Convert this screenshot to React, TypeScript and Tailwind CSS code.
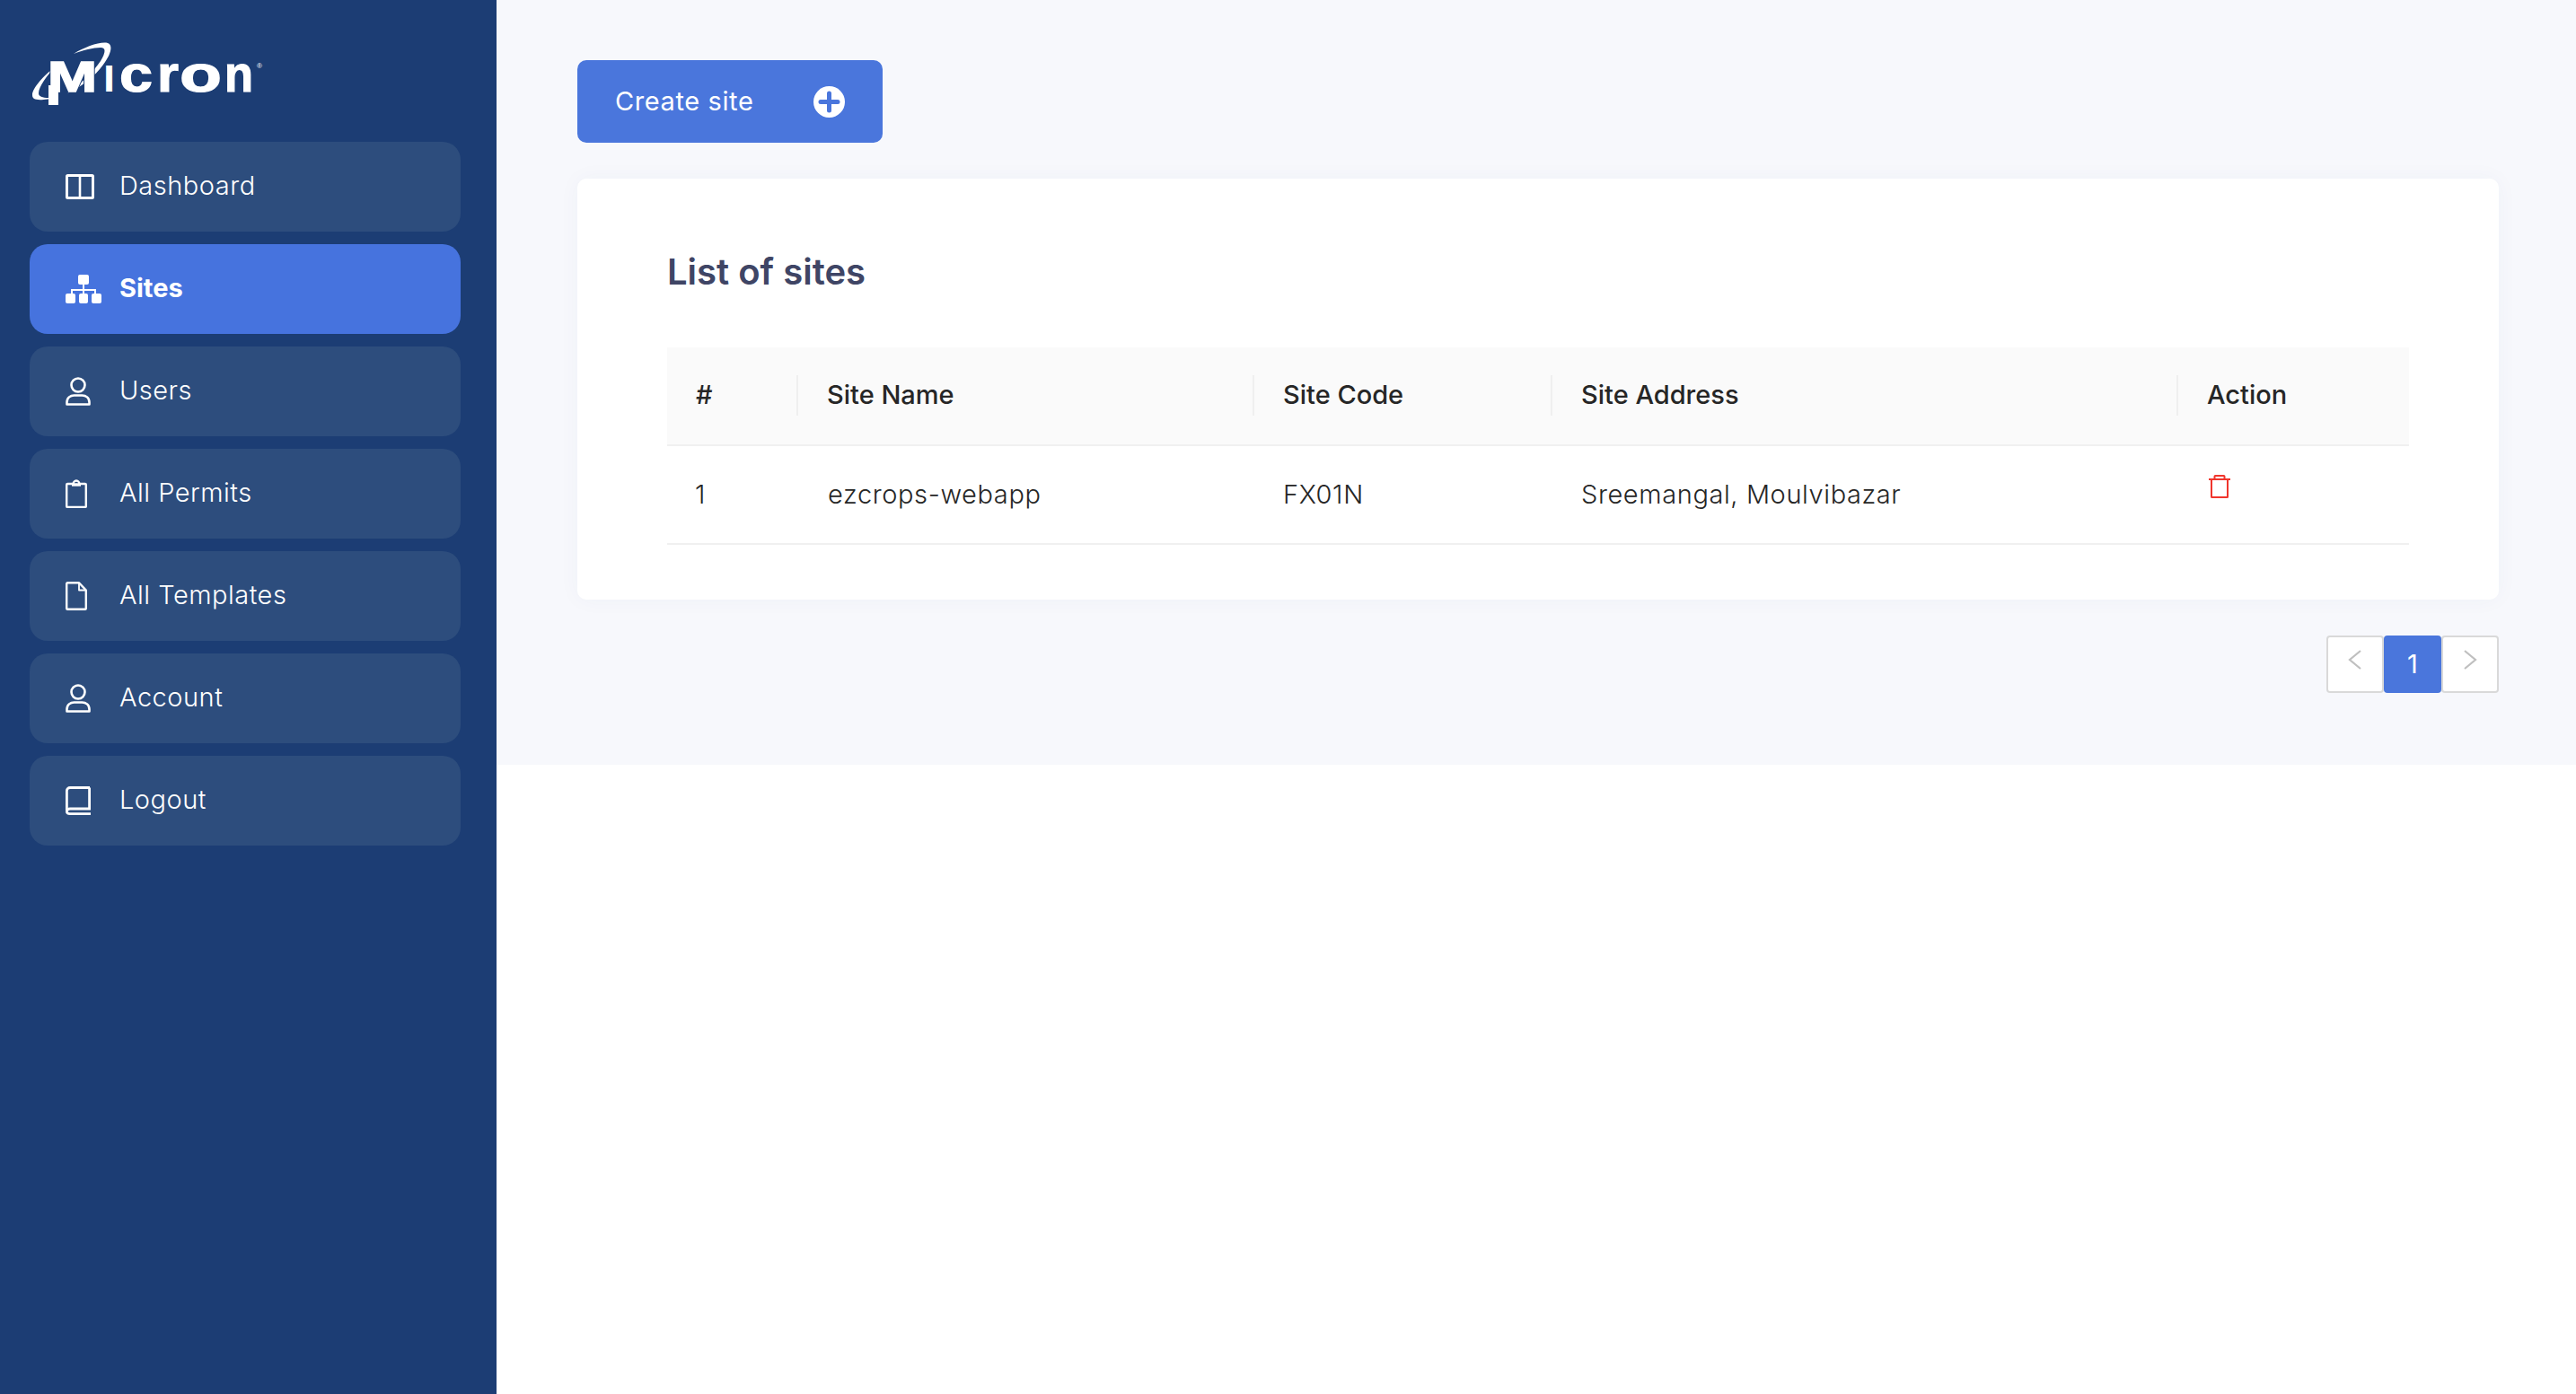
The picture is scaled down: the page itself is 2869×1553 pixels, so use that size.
const DashIcon = () => (
  <svg width="32" height="28" viewBox="0 0 32 28" fill="none" stroke="white" strokeWidth="3">
    <rect x="1.5" y="1.5" width="29" height="25" rx="1" />
    <path d="M16 2v24" strokeWidth="2.600" />
  </svg>
);

const SitesIcon = () => (
  <svg width="40" height="32" viewBox="0 0 40 32" fill="white">
    <rect x="14" y="0" width="12" height="11" rx="2" />
    <rect x="0" y="21" width="11" height="11" rx="2" />
    <rect x="15" y="21" width="10" height="11" rx="2" />
    <rect x="29" y="21" width="11" height="11" rx="2" />
    <path d="M19 10h2v6h13v6h-2v-4H21v4h-2v-4H8v4H6v-6h13z" />
  </svg>
);

const UserIcon = () => (
  <svg width="28" height="32" viewBox="0 0 28 32" fill="none" stroke="white" strokeWidth="2.600">
    <circle cx="14" cy="9" r="7.500" />
    <path d="M1.500 30.500v-2.500c0-5 4-7.500 8-7.500h9c4 0 8 2.500 8 7.500v2.500z" strokeLinejoin="round" />
  </svg>
);

const ClipboardIcon = () => (
  <svg width="24" height="32" viewBox="0 0 24 32" fill="none" stroke="white" strokeWidth="2.400">
    <path d="M8.500 5H2.200a1 1 0 0 0-1 1v24a1 1 0 0 0 1 1h19.600a1 1 0 0 0 1-1V6a1 1 0 0 0-1-1h-6.300" strokeLinejoin="round" />
    <path d="M8.500 5.500c0-2 1.500-4 3.500-4s3.500 2 3.500 4z" />
    <path d="M7 6.500h10" />
  </svg>
);

const FileIcon = () => (
  <svg width="24" height="32" viewBox="0 0 24 32" fill="none" stroke="white" strokeWidth="2.400" strokeLinejoin="round">
    <path d="M15 1.200H2.200a1 1 0 0 0-1 1v27.600a1 1 0 0 0 1 1h19.600a1 1 0 0 0 1-1V9.500z" />
    <path d="M15 1.500v8h7.500" strokeWidth="1.800" />
  </svg>
);

const BookIcon = () => (
  <svg width="28" height="32" viewBox="0 0 28 32" fill="none" stroke="white" strokeWidth="2.800">
    <path d="M27 1.500H5c-2 0-3.600 1.500-3.600 3.500v22" />
    <path d="M26.600 1.500v23.500H5c-2 0-3.600 1-3.600 3s1.600 2.600 3.600 2.600h23" />
  </svg>
);

const PlusIcon = () => (
  <svg width="35" height="35" viewBox="0 0 35 35">
    <circle cx="17.500" cy="17.500" r="17.500" fill="white" />
    <path d="M17.500 8v19M8 17.500h19" stroke="#4a76dc" strokeWidth="5" strokeLinecap="round" />
  </svg>
);

const TrashIcon = () => (
  <svg width="24" height="26" viewBox="0 0 24 26" fill="none" stroke="#f0352c" strokeWidth="2" strokeLinejoin="round">
    <path d="M0 5h24" />
    <path d="M3 5v19.500a.5.500 0 0 0 .5.500h17a.5.500 0 0 0 .5-.500V5" />
    <path d="M6.500 5V1.800a.8.800 0 0 1 .8-.8h9.400a.8.800 0 0 1 .8.800V5" />
  </svg>
);

const Logo = () => {
  const letters = [
    { ch: "c", x: 133, w: 37 },
    { ch: "r", x: 175, w: 24 },
    { ch: "o", x: 200, w: 47 },
    { ch: "n", x: 250, w: 32 },
  ];
  return (
    <svg width="262" height="72" viewBox="36 47 262 72" fill="white" fontFamily="Liberation Sans, sans-serif" fontWeight="700">
      <path d="M82 60C95 52 112 46 120 48C126 50 124 60 115 72C106 85 90 97 75 104C90 93 104 80 112 68C118 58 118 53 112 53C104 53 92 56 82 60Z" />
      <path d="M63 73C48 85 36 98 36 106C36 112 44 113 65 108C52 110 43 109 43 104C43 97 52 84 63 73Z" />
      <text x="53" y="102" fontSize="48" textLength="55" lengthAdjust="spacingAndGlyphs" stroke="#1c3d74" strokeWidth="3" paintOrder="stroke">M</text>
      <text x="53" y="102" fontSize="48" textLength="55" lengthAdjust="spacingAndGlyphs" stroke="white" strokeWidth="1.600">M</text>
      <rect x="54" y="95" width="11" height="22" />
      <text x="115" y="102" fontSize="43" textLength="13" lengthAdjust="spacingAndGlyphs">I</text>
      {letters.map((l) => (
        <text key={l.ch} x={l.x} y="102" fontSize="58" textLength={l.w} lengthAdjust="spacingAndGlyphs" stroke="white" strokeWidth="1.200">{l.ch}</text>
      ))}
      <text x="286" y="76" fontSize="8" fontWeight="400">®</text>
    </svg>
  );
};

const nav = [
  { label: "Dashboard", icon: <DashIcon /> },
  { label: "Sites", icon: <SitesIcon />, active: true },
  { label: "Users", icon: <UserIcon /> },
  { label: "All Permits", icon: <ClipboardIcon /> },
  { label: "All Templates", icon: <FileIcon /> },
  { label: "Account", icon: <UserIcon /> },
  { label: "Logout", icon: <BookIcon /> },
];

const columns = [
  { label: "#", width: "w-[146px]" },
  { label: "Site Name", width: "w-[508px]" },
  { label: "Site Code", width: "w-[332px]" },
  { label: "Site Address", width: "w-[697px]" },
  { label: "Action", width: "w-[257px]" },
];

export default function App() {
  return (
    <div className="flex min-h-[1553px] bg-white font-['Inter',sans-serif]">
      <aside className="w-[553px] shrink-0 bg-[#1c3d74] pt-[47px] pl-[33px] pr-[40px]">
        <div className="mb-[40px] ml-[3px] h-[71px]">
          <Logo />
        </div>
        <nav className="flex flex-col gap-[14px]">
          {nav.map((item) => (
            <a
              key={item.label}
              className={
                item.active
                  ? "flex h-[100px] items-center rounded-[20px] bg-[#4673de] pl-[40px] text-[29px] font-bold text-white"
                  : "flex h-[100px] items-center rounded-[20px] bg-[#2d4d7d] pl-[40px] text-[29px] font-light tracking-[0.5px] text-white"
              }
            >
              <span className="flex w-[60px] shrink-0 items-center">{item.icon}</span>
              <span className="-translate-y-[1px]">{item.label}</span>
            </a>
          ))}
        </nav>
      </aside>

      <div className="flex-1">
        <main className="h-[852px] bg-[#f7f8fc] pt-[67px] pl-[90px] pr-[86px]">
          <button className="flex h-[92px] w-[340px] items-center justify-between rounded-[10px] bg-[#4a76dc] pl-[42px] pr-[42px] text-[29px] font-normal tracking-[0.6px] text-white">
            <span>Create site</span>
            <PlusIcon />
          </button>

          <section className="mt-[40px] h-[469px] rounded-[10px] bg-white px-[100px] pt-[79px] shadow-[0_0_24px_rgba(60,70,120,0.04)]">
            <h2 className="mb-[59px] text-[40px] leading-[50px] font-semibold text-[#3f4565]">List of sites</h2>
            <table className="w-full table-fixed border-collapse text-[29px] text-[#262626]">
              <thead>
                <tr className="h-[109px] border-b-2 border-[#f0f0f0] bg-[#fafafa]">
                  {columns.map((col, i) => (
                    <th key={col.label} className={`relative pl-[32px] pb-[2px] text-left font-medium ${col.width}`}>
                      {col.label}
                      {i < columns.length - 1 && (
                        <span className="absolute top-[31px] right-0 h-[45px] w-[2px] bg-[#efefef]" />
                      )}
                    </th>
                  ))}
                </tr>
              </thead>
              <tbody>
                <tr className="h-[110px] border-b-2 border-[#f0f0f0] font-light tracking-[0.6px]">
                  <td className="pl-[31px] pb-[1px]">1</td>
                  <td className="pl-[33px] pb-[1px]">ezcrops-webapp</td>
                  <td className="pl-[32px] pb-[1px]">FX01N</td>
                  <td className="pl-[32px] pb-[1px]">Sreemangal, Moulvibazar</td>
                  <td className="pl-[34px] pb-[18px] align-middle">
                    <TrashIcon />
                  </td>
                </tr>
              </tbody>
            </table>
          </section>

          <div className="mt-[40px] flex justify-end">
            <button className="flex h-[64px] w-[64px] items-start justify-center rounded-[4px] border-2 border-[#d9d9d9] bg-white pt-[14px] text-[#bfbfbf]">
              <svg width="16" height="22" viewBox="0 0 16 22" fill="none" stroke="currentColor" strokeWidth="2.200">
                <path d="M14 1L2 11l12 10" />
              </svg>
            </button>
            <button className="flex h-[64px] w-[64px] items-center justify-center rounded-[4px] bg-[#4a76dc] text-[29px] font-normal text-white">
              1
            </button>
            <button className="flex h-[64px] w-[64px] items-start justify-center rounded-[4px] border-2 border-[#d9d9d9] bg-white pt-[14px] text-[#bfbfbf]">
              <svg width="16" height="22" viewBox="0 0 16 22" fill="none" stroke="currentColor" strokeWidth="2.200">
                <path d="M2 1l12 10L2 21" />
              </svg>
            </button>
          </div>
        </main>
      </div>
    </div>
  );
}
